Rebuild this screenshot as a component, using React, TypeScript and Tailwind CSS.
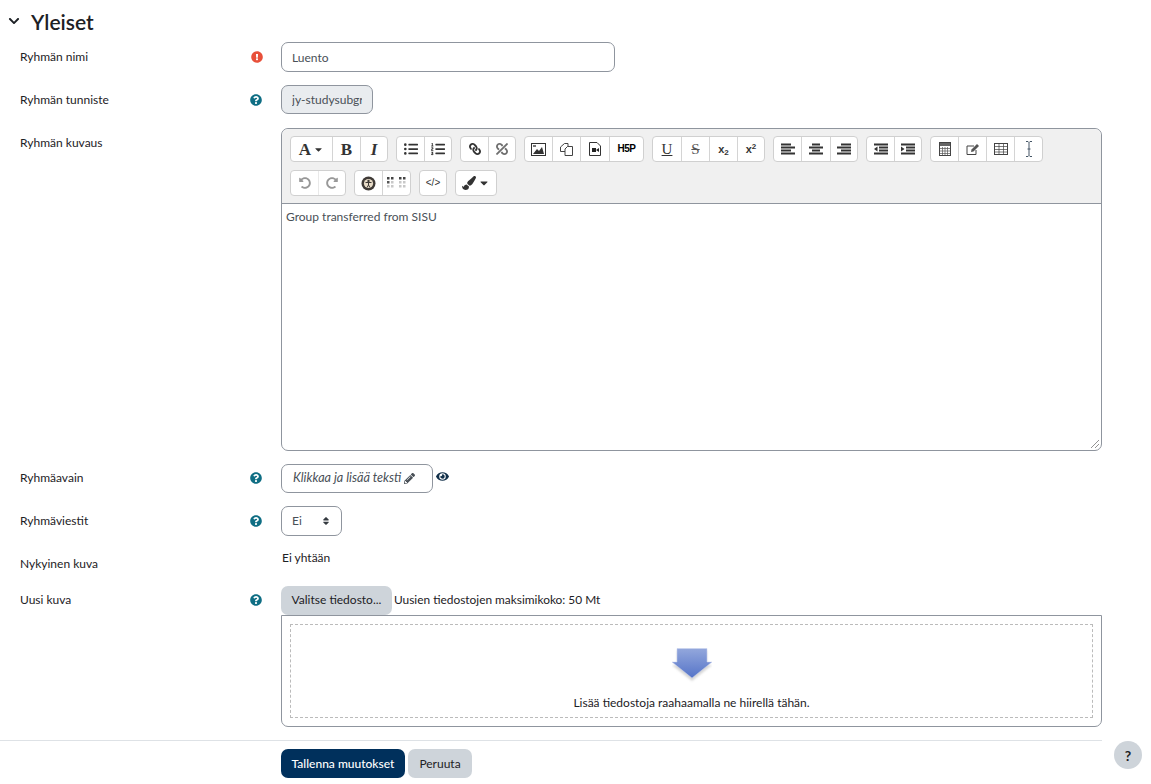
import React from 'react';
import {
  FaCaretDown,
  FaChevronDown,
  FaEye,
  FaExclamationCircle,
  FaLink,
  FaListOl,
  FaListUl,
  FaPaintBrush,
  FaPencilAlt,
  FaQuestionCircle,
  FaRedoAlt,
  FaSort,
  FaUndoAlt,
  FaUnlink,
} from 'react-icons/fa';

const ImageIcon = () => (
  <svg width="15" height="13" viewBox="0 0 15 13">
    <rect x="0.5" y="0.5" width="14" height="12" fill="#fff" stroke="#333" />
    <path d="M2 11 L6 6 L8 8 L11 4 L13 11 Z" fill="#333" />
    <rect x="2" y="2" width="3" height="2" fill="#777" />
  </svg>
);

const FilesIcon = () => (
  <svg width="15" height="15" viewBox="0 0 15 15" fill="#fff" stroke="#444">
    <path d="M5.5 1.5 H9 V9.5 H1.5 V5 Z" />
    <path d="M8.5 4.5 H13.5 V13.5 H6 V7 Z" />
  </svg>
);

const VideoFileIcon = () => (
  <svg width="12" height="14" viewBox="0 0 12 14">
    <path d="M0.5 0.5 H8 L11.5 4 V13.5 H0.5 Z" fill="#fff" stroke="#333" />
    <rect x="3" y="6" width="4" height="4" fill="#222" />
    <path d="M7 8 L10 6 V10 Z" fill="#222" />
  </svg>
);

const Lines = ({ widths, aligns }: { widths: number[]; aligns: 'left' | 'center' | 'right' }) => (
  <svg width="14" height="12" viewBox="0 0 14 12">
    {widths.map((w, i) => {
      const x = aligns === 'left' ? 0 : aligns === 'right' ? 14 - w : (14 - w) / 2;
      return <rect key={i} x={x} y={i * 3 + 0.5} width={w} height="2" fill="#333" />;
    })}
  </svg>
);

const IndentIcon = ({ out }: { out?: boolean }) => (
  <svg width="14" height="12" viewBox="0 0 14 12">
    <rect x="0" y="0.5" width="14" height="2" fill="#333" />
    <rect x="5" y="3.5" width="9" height="2" fill="#333" />
    <rect x="5" y="6.5" width="9" height="2" fill="#333" />
    <rect x="0" y="9.5" width="14" height="2" fill="#333" />
    <path d={out ? 'M0 6 L3.5 3.5 V8.5 Z' : 'M3.5 6 L0 3.5 V8.5 Z'} fill="#333" />
  </svg>
);

const CalcIcon = () => (
  <svg width="12" height="14" viewBox="0 0 12 14">
    <rect x="0.5" y="0.5" width="11" height="13" fill="#fff" stroke="#444" />
    <rect x="1" y="1" width="10" height="3" fill="#666" />
    <path d="M1 6.5 H11 M1 9 H11 M1 11.5 H11 M3.5 5 V13 M6 5 V13 M8.5 5 V13" stroke="#555" strokeWidth="0.7" />
  </svg>
);

const EditIcon = () => (
  <svg width="14" height="13" viewBox="0 0 14 13" fill="none">
    <path d="M10 7 V11.5 H1 V3 H8" stroke="#444" />
    <path d="M5 9 L5.5 6.5 L11 1 L13 3 L7.5 8.5 Z" fill="#555" />
  </svg>
);

const TableIcon = () => (
  <svg width="14" height="12" viewBox="0 0 14 12" fill="none" stroke="#444">
    <rect x="0.5" y="0.5" width="13" height="11" />
    <path d="M0.5 3.5 H13.5 M0.5 6.5 H13.5 M0.5 9 H13.5 M5 0.5 V11.5 M9.5 0.5 V11.5" strokeWidth="0.7" />
  </svg>
);

const CursorIcon = () => (
  <svg width="8" height="16" viewBox="0 0 8 16" fill="none" stroke="#456">
    <path d="M1 0.5 H3 L4 1.5 L5 0.5 H7 M1 15.5 H3 L4 14.5 L5 15.5 H7 M4 1.5 V14.5 M2.5 8 H5.5" />
  </svg>
);

const AccessIcon = () => (
  <svg width="15" height="15" viewBox="0 0 15 15">
    <circle cx="7.5" cy="7.5" r="7" fill="#3f3a36" />
    <circle cx="7.5" cy="7.5" r="4.6" fill="#e8dcc8" />
    <circle cx="7.5" cy="5" r="1.2" fill="#3f3a36" />
    <path d="M4.5 6.5 H10.5 M7.5 6.5 V9 L6 11.5 M7.5 9 L9 11.5" stroke="#3f3a36" fill="none" />
  </svg>
);

const BrailleIcon = () => (
  <svg width="20" height="12" viewBox="0 0 20 12">
    {[1, 5, 13, 17].map((x, c) =>
      [1, 5, 9].map((y, r) => (
        <rect key={`${c}-${r}`} x={x - 1} y={y - 1} width="2.5" height="2.5" fill={r === 0 ? '#444' : c === 0 && r === 1 ? '#555' : '#c8c8c8'} />
      )),
    )}
  </svg>
);

const ToolButton = ({ width = 'w-7', children, disabled }: { width?: string; children: React.ReactNode; disabled?: boolean }) => (
  <div className={`${width} h-full flex items-center justify-center border-r border-[#d4d4d4] last:border-r-0 ${disabled ? 'opacity-50' : ''}`}>
    {children}
  </div>
);

const ToolGroup = ({ children }: { children: React.ReactNode }) => (
  <div className="flex h-[26px] bg-white border border-[#d0d0d0] rounded-[4px] text-[#333]">{children}</div>
);

const serif = "font-['Liberation_Serif',serif]";

const Toolbar = () => (
  <div className="bg-[#f0f0f0] border-b border-[#8f959e] rounded-t-[7px] h-[75px] pl-2 pt-[7px]">
    <div className="flex gap-2">
      <ToolGroup>
        <ToolButton width="w-[42px]">
          <span className={`${serif} font-bold text-[17px] leading-none`}>A</span>
          <FaCaretDown size={11} className="ml-0.5" />
        </ToolButton>
        <ToolButton>
          <span className={`${serif} font-bold text-[17px] leading-none`}>B</span>
        </ToolButton>
        <ToolButton width="w-[26px]">
          <span className={`${serif} font-bold italic text-[17px] leading-none`}>I</span>
        </ToolButton>
      </ToolGroup>
      <ToolGroup>
        <ToolButton><FaListUl size={14} /></ToolButton>
        <ToolButton width="w-[26px]"><FaListOl size={14} /></ToolButton>
      </ToolGroup>
      <ToolGroup>
        <ToolButton><FaLink size={12} className="-scale-x-100" /></ToolButton>
        <ToolButton width="w-[26px]"><FaUnlink size={12} className="-scale-x-100 opacity-70" /></ToolButton>
      </ToolGroup>
      <ToolGroup>
        <ToolButton><ImageIcon /></ToolButton>
        <ToolButton><FilesIcon /></ToolButton>
        <ToolButton width="w-[29px]"><VideoFileIcon /></ToolButton>
        <ToolButton width="w-[33px]">
          <span className="font-['Liberation_Sans',sans-serif] font-bold text-[10px] leading-none text-black tracking-[-0.5px]">H5P</span>
        </ToolButton>
      </ToolGroup>
      <ToolGroup>
        <ToolButton width="w-[29px]">
          <span className={`${serif} text-[15px] leading-none underline`}>U</span>
        </ToolButton>
        <ToolButton>
          <span className={`${serif} text-[15px] leading-none line-through text-[#555]`}>S</span>
        </ToolButton>
        <ToolButton>
          <span className="font-['Liberation_Sans',sans-serif] font-bold text-[11px]">x<sub className="text-[8px]">2</sub></span>
        </ToolButton>
        <ToolButton width="w-[26px]">
          <span className="font-['Liberation_Sans',sans-serif] font-bold text-[11px]">x<sup className="text-[8px]">2</sup></span>
        </ToolButton>
      </ToolGroup>
      <ToolGroup>
        <ToolButton><Lines widths={[10, 14, 10, 14]} aligns="left" /></ToolButton>
        <ToolButton width="w-[29px]"><Lines widths={[8, 14, 8, 14]} aligns="center" /></ToolButton>
        <ToolButton width="w-[26px]"><Lines widths={[10, 14, 10, 14]} aligns="right" /></ToolButton>
      </ToolGroup>
      <ToolGroup>
        <ToolButton><IndentIcon out /></ToolButton>
        <ToolButton width="w-[26px]"><IndentIcon /></ToolButton>
      </ToolGroup>
      <ToolGroup>
        <ToolButton><CalcIcon /></ToolButton>
        <ToolButton><EditIcon /></ToolButton>
        <ToolButton><TableIcon /></ToolButton>
        <ToolButton width="w-[27px]"><CursorIcon /></ToolButton>
      </ToolGroup>
    </div>
    <div className="flex gap-2 mt-2">
      <ToolGroup>
        <ToolButton disabled><FaUndoAlt size={12} /></ToolButton>
        <ToolButton disabled width="w-[26px]"><FaRedoAlt size={12} /></ToolButton>
      </ToolGroup>
      <ToolGroup>
        <ToolButton><AccessIcon /></ToolButton>
        <ToolButton width="w-[27px]"><BrailleIcon /></ToolButton>
      </ToolGroup>
      <ToolGroup>
        <ToolButton width="w-[26px]">
          <span className="font-['Liberation_Sans',sans-serif] text-[10px] leading-none">&lt;/&gt;</span>
        </ToolButton>
      </ToolGroup>
      <ToolGroup>
        <ToolButton width="w-10">
          <FaPaintBrush size={14} />
          <FaCaretDown size={12} className="ml-0.5" />
        </ToolButton>
      </ToolGroup>
    </div>
  </div>
);

const Row = ({ label, icon, children, className = '', labelClass = 'pt-[7px]', iconClass = 'pt-[9px]' }: {
  label: string;
  icon?: 'help' | 'required';
  children: React.ReactNode;
  className?: string;
  labelClass?: string;
  iconClass?: string;
}) => (
  <div className={`flex ${className}`}>
    <div className={`w-[229px] text-[12px] leading-[16px] ${labelClass}`}>{label}</div>
    <div className={`w-[32px] ${iconClass}`}>
      {icon === 'help' && <FaQuestionCircle size={12} className="text-[#0f6e84] ml-[1px]" />}
      {icon === 'required' && <FaExclamationCircle size={12} className="text-[#e8503a] ml-[2px]" />}
    </div>
    <div className="w-[821px]">{children}</div>
  </div>
);

export default function App() {
  return (
    <div className="relative h-[784px] overflow-hidden bg-white font-['Lato',sans-serif] text-[#1d2125]">
      <div className="flex items-center h-[38px] pl-[8px] pt-1">
        <FaChevronDown size={12} className="text-[#1d2125]" />
        <h2 className="ml-[11px] text-[21px] leading-none font-semibold">Yleiset</h2>
      </div>

      <div className="pl-5 pt-1">
        <Row label="Ryhmän nimi" icon="required" className="mb-[13px]">
          <div className="w-[334px] h-[30px] border border-[#8f959e] rounded-[7px] px-[10px] pt-[1px] flex items-center text-[12px] text-[#495057]">
            Luento
          </div>
        </Row>
        <Row label="Ryhmän tunniste" icon="help" className="mb-[14px]">
          <div className="w-[92px] h-[29px] border border-[#8f959e] rounded-[7px] bg-[#e9ecef] pl-[10px] flex items-center text-[12px] text-[#495057] overflow-hidden whitespace-nowrap">
            <span className="w-[70px] overflow-hidden">jy-studysubgroup</span>
          </div>
        </Row>
        <Row label="Ryhmän kuvaus" className="mb-[13px]">
          <div className="relative h-[323px] border border-[#8f959e] rounded-[7px]">
            <Toolbar />
            <div className="px-1 pt-[5px] text-[12px] leading-[16px] text-[#495057]">Group transferred from SISU</div>
            <svg className="absolute right-[1px] bottom-[1px]" width="10" height="10" viewBox="0 0 10 10" stroke="#777" strokeWidth="0.8">
              <path d="M1 9 L9 1 M5 9 L9 5" />
            </svg>
          </div>
        </Row>
        <Row label="Ryhmäavain" icon="help" className="mb-[13px]" labelClass="pt-[6px]" iconClass="pt-[8px]">
          <div className="flex items-start">
            <div className="w-[152px] h-[29px] border border-[#8f959e] rounded-[7px] pl-[11px] flex items-center italic text-[12.6px] text-[#495057]">
              Klikkaa ja lisää teksti
              <FaPencilAlt size={11} className="ml-[3px] text-[#495057]" />
            </div>
            <FaEye size={13} className="ml-[3px] mt-[6px] text-[#12304a]" />
          </div>
        </Row>
        <Row label="Ryhmäviestit" icon="help" className="mb-[14px]">
          <div className="w-[61px] h-[30px] border border-[#8f959e] rounded-[7px] pl-[10px] pr-[10px] flex items-center justify-between text-[12px] text-[#495057]">
            Ei
            <FaSort size={10} className="text-[#343a40]" />
          </div>
        </Row>
        <Row label="Nykyinen kuva" className="mb-[12px]" labelClass="pt-[6px]">
          <div className="h-[24px] pl-[1px] text-[12px] leading-[16px]">Ei yhtään</div>
        </Row>
        <Row label="Uusi kuva" icon="help" labelClass="pt-[6px]" iconClass="pt-[8px]">
          <div className="flex items-center h-[29px]">
            <div className="w-[111px] h-[29px] pb-[1px] bg-[#ced4da] rounded-[7px] flex items-center justify-center text-[12px]">Valitse tiedosto...</div>
            <span className="ml-[2px] pb-[1px] text-[11.9px]">Uusien tiedostojen maksimikoko: 50 Mt</span>
          </div>
          <div className="h-[112px] border border-[#8f959e] rounded-br-[7px] rounded-bl-[7px] p-2">
            <div className="h-full border border-dashed border-[#bbb] flex flex-col items-center pt-[23px]">
              <svg width="40" height="36" viewBox="0 0 40 36">
                <defs>
                  <linearGradient id="arrow" x1="0" y1="0" x2="0" y2="1">
                    <stop offset="0" stopColor="#93a7dc" />
                    <stop offset="1" stopColor="#5574c8" />
                  </linearGradient>
                  <filter id="soft"><feGaussianBlur stdDeviation="1" /></filter>
                </defs>
                <path d="M5 3 H35 V17 H40 L20 33 L0 17 H5 Z" fill="#999" opacity="0.4" filter="url(#soft)" />
                <path d="M5 0.5 H35 V14 H40 L20 30 L0 14 H5 Z" fill="url(#arrow)" stroke="#c8d3ee" strokeWidth="0.5" />
              </svg>
              <div className="mt-[11px] text-[12px] leading-[16px]">Lisää tiedostoja raahaamalla ne hiirellä tähän.</div>
            </div>
          </div>
        </Row>
      </div>

      <div className="ml-0 w-[1102px] border-t border-[#dee2e6] mt-[13px]" />
      <div className="flex pl-[281px] pt-2 gap-[3px]">
        <div className="w-[124px] h-[29px] rounded-[7px] bg-[#00305c] text-white font-medium text-[12px] flex items-center justify-center">Tallenna muutokset</div>
        <div className="w-[64px] h-[29px] rounded-[7px] bg-[#ced4da] text-[12px] flex items-center justify-center">Peruuta</div>
      </div>

      <div className="absolute left-[1114px] top-[741px] w-[28px] h-[28px] rounded-full bg-[#ced4da] flex items-center justify-center font-bold text-[14px]">?</div>
    </div>
  );
}
